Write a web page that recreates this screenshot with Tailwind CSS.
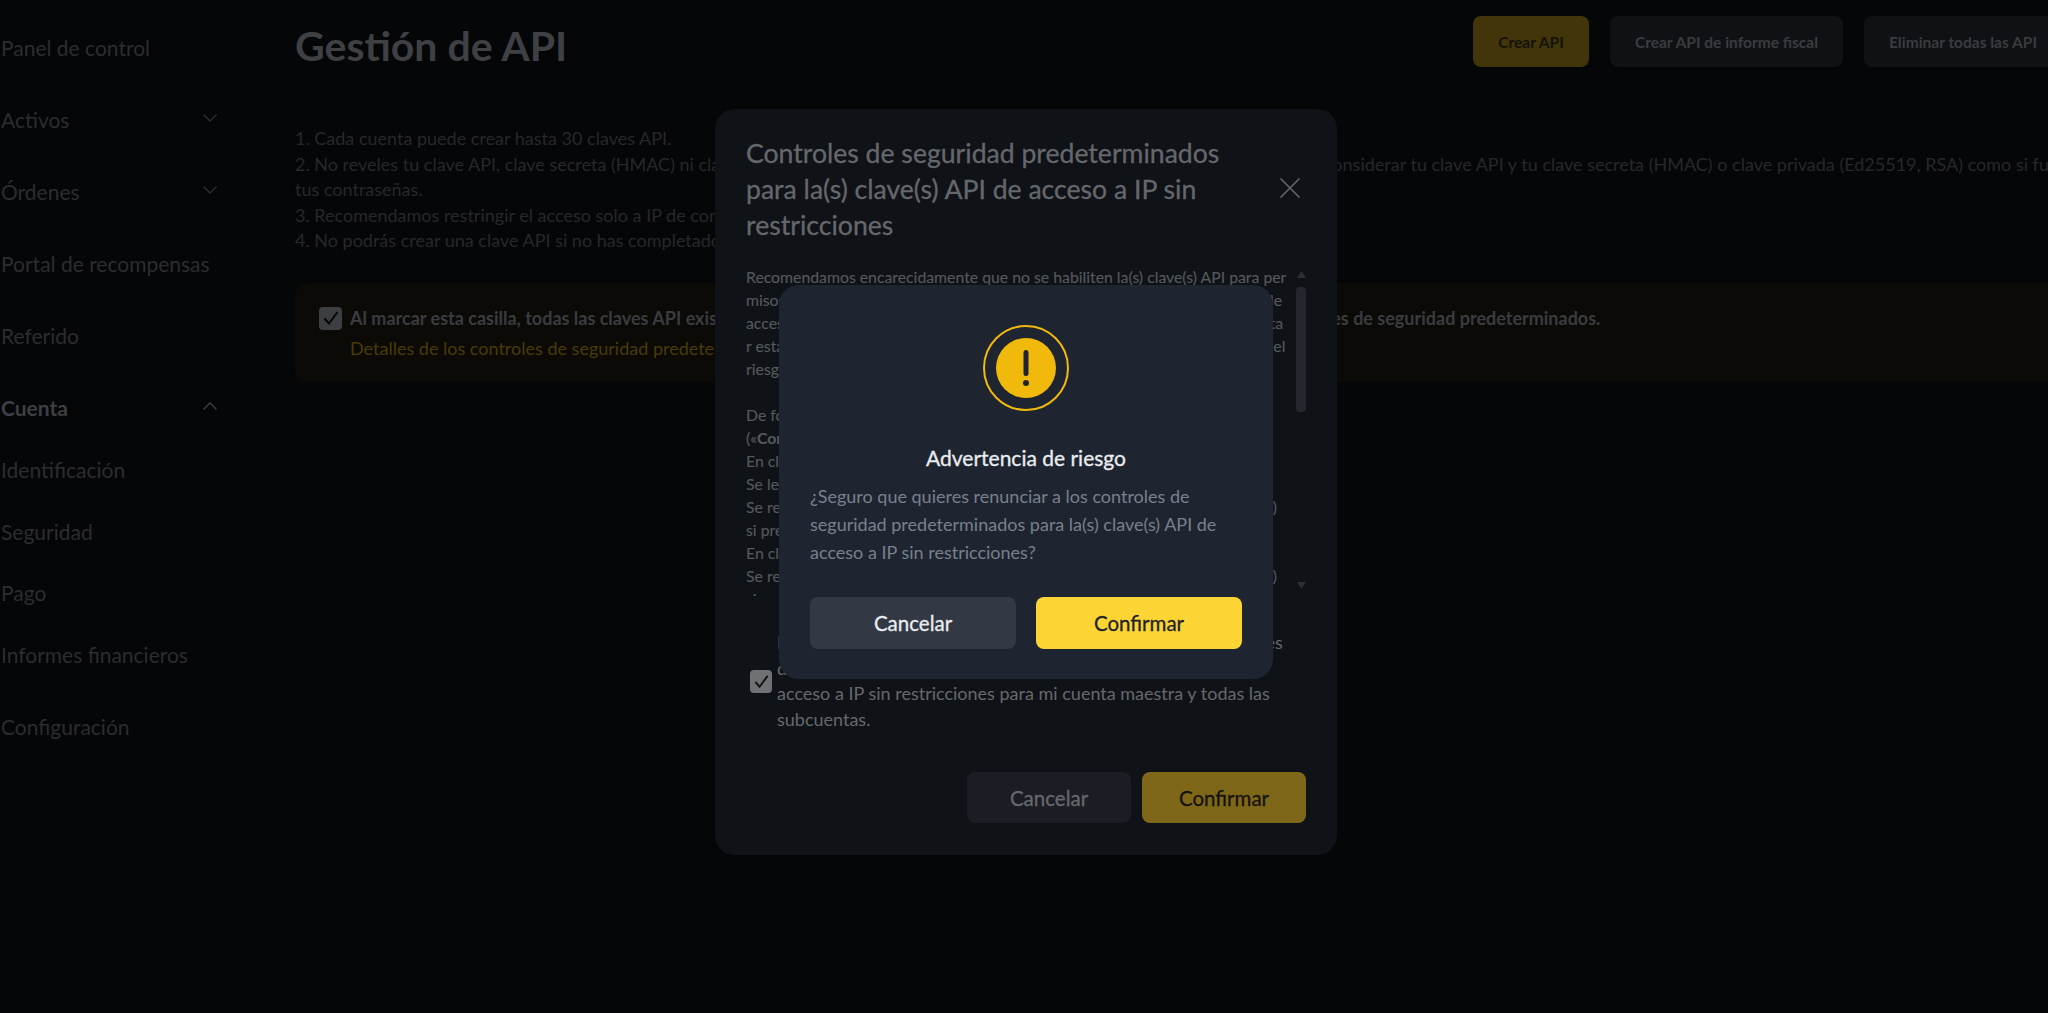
<!DOCTYPE html>
<html lang="es"><head><meta charset="utf-8"><title>Gestión de API</title>
<script src="https://cdn.jsdelivr.net/npm/@tailwindcss/browser@4"></script></head>
<body class="bg-[#050608]">
<div class="relative w-[2048px] h-[1013px] overflow-hidden bg-[#050608] font-['Lato','Liberation_Sans',sans-serif] flex">
  <aside class="w-[295px] shrink-0 pl-[1px] pr-[78px] text-[21px] text-[#2b2d30] whitespace-nowrap">
    <div class="h-[72px] mt-[12px] flex items-center">Panel de control</div>
    <div class="h-[72px] flex items-center justify-between">Activos<svg class="w-[14px] h-[8px] mb-1" viewBox="0 0 14 8" fill="none" stroke="#2b2d30" stroke-width="1.4"><path d="M.5.5L7 7 13.500.5"/></svg></div>
    <div class="h-[72px] flex items-center justify-between">Órdenes<svg class="w-[14px] h-[8px] mb-1" viewBox="0 0 14 8" fill="none" stroke="#2b2d30" stroke-width="1.4"><path d="M.5.5L7 7 13.500.5"/></svg></div>
    <div class="h-[72px] flex items-center">Portal de recompensas</div>
    <div class="h-[72px] flex items-center">Referido</div>
    <div class="h-[72px] flex items-center justify-between font-bold text-[#3d3f42]">Cuenta<svg class="w-[14px] h-[8px] mb-1" viewBox="0 0 14 8" fill="none" stroke="#3d3f42" stroke-width="1.4"><path d="M.5 7.500L7 1l6.500 6.500"/></svg></div>
    <div class="h-[62px] -mt-[5px] flex items-center">Identificación</div>
    <div class="h-[61px] flex items-center">Seguridad</div>
    <div class="h-[62px] flex items-center">Pago</div>
    <div class="h-[62px] flex items-center">Informes financieros</div>
    <div class="h-[72px] mt-[5px] flex items-center">Configuración</div>
  </aside>
  <main class="w-[1800px] shrink-0">
    <div class="flex items-start h-[114px] pt-[15px] w-[1767px]">
      <h1 class="text-[41px] leading-[62px] font-bold text-[#3e4043] mr-auto">Gestión de API</h1>
      <div class="flex gap-[21px] mt-[1px] text-[15.5px] font-bold">
        <div class="w-[116px] h-[51px] pt-[3px] rounded-[8px] bg-[#423509] text-[#141208] flex items-center justify-center">Crear API</div>
        <div class="w-[233px] h-[51px] pt-[3px] rounded-[8px] bg-[#0f1115] text-[#3a3c3f] flex items-center justify-center">Crear API de informe fiscal</div>
        <div class="w-[198px] h-[51px] pt-[3px] rounded-[8px] bg-[#0f1115] text-[#3a3c3f] flex items-center justify-center">Eliminar todas las API</div>
      </div>
    </div>
    <div class="text-[18px] leading-[25.6px] text-[#26282b] mt-[12px] w-[1760px]">
      <p>1. Cada cuenta puede crear hasta 30 claves API.</p>
      <p class="whitespace-nowrap">2. No reveles tu clave API, clave secreta (HMAC) ni clave privada (Ed25519, RSA) a ninguna entidad para evitar las pérdidas. Debes considerar tu clave API y tu clave secreta (HMAC) o clave privada (Ed25519, RSA) como si fueran</p>
      <p>tus contraseñas.</p>
      <p>3. Recomendamos restringir el acceso solo a IP de confianza para aumentar la seguridad de tu cuenta.</p>
      <p>4. No podrás crear una clave API si no has completado la verificación KYC.</p>
    </div>
    <div class="mt-[29px] h-[99px] rounded-[12px] bg-[#0b0a07] pt-[24px] pl-[24px] w-[1790px]">
      <div class="flex items-center gap-[8px] text-[18px] font-bold text-[#3a3c3f] whitespace-nowrap h-[23px]">
        <span class="w-[23px] h-[23px] rounded-[4px] bg-[#3c3e41] flex items-center justify-center"><svg class="w-[18px] h-[18px]" viewBox="0 0 18 18" fill="none" stroke="#050608" stroke-width="2"><path d="M2.5 9.5l4.5 5L15.5 3"/></svg></span>
        Al marcar esta casilla, todas las claves API existentes con acceso a IP sin restricciones de tu cuenta renunciarán a los controles de seguridad predeterminados.
      </div>
      <a class="block ml-[31px] mt-[7px] text-[18px] leading-[23px] text-[#4a3a06]">Detalles de los controles de seguridad predeterminados</a>
    </div>
  </main>

  <!-- first dialog -->
  <div class="absolute left-[715px] top-[109px] w-[622px] h-[746px] rounded-[20px] bg-[#0f1216] pl-[31px] pr-[31px] pt-[26px]">
    <div class="flex items-center h-[108px]">
      <h2 class="w-[500px] text-[26.6px] leading-[36px] [-webkit-text-stroke:0.3px] text-[#65676b]">Controles de seguridad predeterminados para la(s) clave(s) API de acceso a IP sin restricciones</h2>
      <svg class="w-[22px] h-[22px] ml-auto mr-[5px] mb-[2px]" viewBox="0 0 22 22" fill="none" stroke="#65676b" stroke-width="1.6"><path d="M1.500 1.500l19 19M20.500 1.500l-19 19"/></svg>
    </div>
    <div class="relative h-[332px] mt-[22px] overflow-hidden text-[15.8px] leading-[23px] text-[#55585c] [-webkit-text-stroke:0.15px] whitespace-nowrap">
      <p class="w-[539px] [text-align-last:justify]">Recomendamos encarecidamente que no se habiliten la(s) clave(s) API para per</p>
      <p class="w-[536px] [text-align-last:justify]">misos sensibles sin restricción de acceso a IP ni que se desactive la opción de</p>
      <p class="w-[537px] [text-align-last:justify]">acceso restringido. Si aun así decides continuar y desactivar la opción, acepta</p>
      <p class="w-[533px] [text-align-last:justify]">r esta configuración, lo que supone asumir la plena responsabilidad por todo el</p>
      <p>riesgo asociado.</p>
      <p>&nbsp;</p>
      <p>De forma predeterminada, se aplican los controles de seguridad</p>
      <p>(«<b>Controles</b>») de la siguiente manera:</p>
      <p>En claves API de la cuenta:</p>
      <p>Se les aplicará una revisión periódica.</p>
      <p class="w-[531px] [text-align-last:justify]">Se revocarán los permisos de las claves que no tengan restricción de IP (RSA)</p>
      <p>si presentan actividad sospechosa.</p>
      <p>En claves API de subcuentas:</p>
      <p class="w-[531px] [text-align-last:justify]">Se revocarán los permisos de las claves que no tengan restricción de IP (RSA)</p>
      <p>si presentan actividad sospechosa.</p>
      <div class="absolute right-0 top-0 bottom-0 w-[10px] bg-[#0f1216]">
        <svg class="absolute left-[1px] top-[6px] w-[9px] h-[7px]" viewBox="0 0 9 7" fill="#2c2f34"><path d="M4.500 0L9 7H0z"/></svg>
        <div class="absolute left-0 top-[22px] w-[10px] h-[125px] rounded-[4px] bg-[#24272d]"></div>
        <svg class="absolute left-[1px] top-[317px] w-[9px] h-[7px]" viewBox="0 0 9 7" fill="#2c2f34"><path d="M0 0h9L4.500 7z"/></svg>
      </div>
    </div>
    <div class="flex items-center mt-[33px] ml-[4px] gap-[5px]">
      <span class="w-[22px] h-[23px] shrink-0 rounded-[4px] bg-[#6f7174] flex items-center justify-center"><svg class="w-[17px] h-[17px]" viewBox="0 0 18 18" fill="none" stroke="#0f1216" stroke-width="2"><path d="M2.500 9.500l4.500 5L15.500 3"/></svg></span>
      <p class="text-[18px] leading-[25.6px] text-[#66686c] w-[520px] whitespace-nowrap">He leído y entiendo los riesgos, y deseo renunciar a los controles<br>de seguridad predeterminados para todas la(s) clave(s) API de<br>acceso a IP sin restricciones para mi cuenta maestra y todas las<br>subcuentas.</p>
    </div>
    <div class="flex justify-end gap-[11px] mt-[40px] text-[20.5px] [-webkit-text-stroke:0.3px]">
      <div class="w-[164px] h-[51px] rounded-[8px] bg-[#1a1d24] text-[#66686c] flex items-center justify-center">Cancelar</div>
      <div class="w-[164px] h-[51px] rounded-[8px] bg-[#7f671a] text-[#15130c] flex items-center justify-center">Confirmar</div>
    </div>
  </div>

  <!-- second dialog -->
  <div class="absolute left-[779px] top-[285px] w-[494px] h-[394px] rounded-[20px] bg-[#1e2530] px-[31px] pt-[40px]">
    <svg class="block mx-auto w-[86px] h-[86px]" viewBox="0 0 86 86"><circle cx="43" cy="43" r="42" fill="none" stroke="#f0b90b" stroke-width="2"/><circle cx="43" cy="43" r="30" fill="#f0b90b"/><path d="M43 27.500v21" stroke="#1e2530" stroke-width="5" stroke-linecap="round"/><circle cx="43" cy="58" r="3" fill="#1e2530"/></svg>
    <h3 class="mt-[33px] text-center text-[21px] leading-[28px] [-webkit-text-stroke:0.3px] text-[#eaecef]">Advertencia de riesgo</h3>
    <p class="mt-[10px] text-[18px] leading-[28px] text-[#78808d]">¿Seguro que quieres renunciar a los controles de seguridad predeterminados para la(s) clave(s) API de acceso a IP sin restricciones?</p>
    <div class="flex justify-between mt-[31px] text-[20.5px] [-webkit-text-stroke:0.3px]">
      <div class="w-[206px] h-[52px] rounded-[8px] bg-[#323945] text-[#eaecef] flex items-center justify-center">Cancelar</div>
      <div class="w-[206px] h-[52px] rounded-[8px] bg-[#fcd535] text-[#1e2329] flex items-center justify-center">Confirmar</div>
    </div>
  </div>
</div>
</body></html>
